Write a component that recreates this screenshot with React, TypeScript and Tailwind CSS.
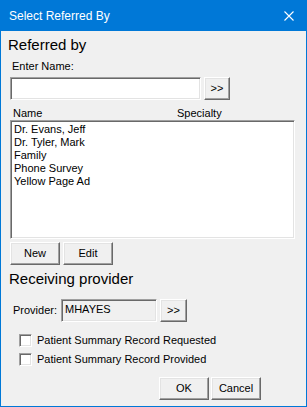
import React from 'react';

const raised =
  'border border-t-white border-l-white border-r-[#696969] border-b-[#696969] shadow-[inset_-1px_-1px_#a0a0a0,inset_1px_1px_#e3e3e3] bg-[#f0f0f0]';
const sunken =
  'border border-t-[#a0a0a0] border-l-[#a0a0a0] border-r-white border-b-white shadow-[inset_1px_1px_#696969,inset_-1px_-1px_#e3e3e3]';

const Btn: React.FC<{ label: string; className?: string }> = ({ label, className }) => (
  <div className={`${raised} h-[23px] flex items-center justify-center text-[11px] leading-none text-black ${className ?? ''}`}>
    {label}
  </div>
);

const Check: React.FC<{ label: string }> = ({ label }) => (
  <div className="flex items-center h-[13px] pl-[9px]">
    <div className={`${sunken} w-[13px] h-[13px] bg-white`} />
    <span className="ml-[5px] text-[11px] leading-[13px]">{label}</span>
  </div>
);

const referrals = ['Dr. Evans, Jeff', 'Dr. Tyler, Mark', 'Family', 'Phone Survey', 'Yellow Page Ad'];

export default function App() {
  return (
    <div
      className="w-[307px] h-[407px] flex flex-col border-x border-b border-[#0078d7] bg-[#f0f0f0] text-black overflow-hidden"
      style={{ fontFamily: '"Liberation Sans", Arial, sans-serif' }}
    >
      {/* Title bar */}
      <div className="h-[31px] bg-[#0078d7] flex items-center justify-between pl-[8px] pr-[12px] shrink-0">
        <span className="text-white text-[12px]">Select Referred By</span>
        <svg width="10" height="10" viewBox="0 0 10 10" className="text-white">
          <path d="M0.5 0.5 L9.5 9.5 M9.5 0.5 L0.5 9.5" stroke="currentColor" strokeWidth="1.1" />
        </svg>
      </div>

      <div className="flex flex-col pl-[9px]">
        {/* Referred by */}
        <div className="mt-[5px] -ml-[2px] text-[15px] leading-[17px]">Referred by</div>
        <div className="mt-[7px] ml-[2px] text-[11px] leading-[13px]">Enter Name:</div>
        <div className="mt-[4px] flex gap-[3px]">
          <div className={`${sunken} w-[191px] h-[23px] bg-white`} />
          <Btn label=">>" className="w-[26px]" />
        </div>

        <div className="mt-[7px] flex text-[11px] leading-[13px]">
          <span className="ml-[3px] w-[164px]">Name</span>
          <span>Specialty</span>
        </div>
        <div className={`${sunken} bg-white w-[285px] h-[119px] pt-[2px] pl-[3px]`}>
          {referrals.map(r => (
            <div key={r} className="text-[11px] leading-[13px]">
              {r}
            </div>
          ))}
        </div>

        <div className="mt-[3px] flex gap-[3px]">
          <Btn label="New" className="w-[50px]" />
          <Btn label="Edit" className="w-[50px]" />
        </div>

        {/* Receiving provider */}
        <div className="mt-[5px] -ml-[1px] text-[15px] leading-[17px]">Receiving provider</div>
        <div className="mt-[12px] flex items-center">
          <span className="ml-[3px] w-[48px] text-[11px] leading-[13px]">Provider:</span>
          <div className={`${sunken} w-[96px] h-[23px] bg-[#f0f0f0] text-[11px] leading-[13px] pl-[3px] pt-[3px]`}>
            MHAYES
          </div>
          <Btn label=">>" className="w-[27px] ml-[3px]" />
        </div>

        <div className="mt-[12px] flex flex-col gap-[6px]">
          <Check label="Patient Summary Record Requested" />
          <Check label="Patient Summary Record Provided" />
        </div>

        <div className="mt-[11px] flex gap-[2px] pl-[149px]">
          <Btn label="OK" className="w-[50px]" />
          <Btn label="Cancel" className="w-[50px]" />
        </div>
      </div>
    </div>
  );
}
